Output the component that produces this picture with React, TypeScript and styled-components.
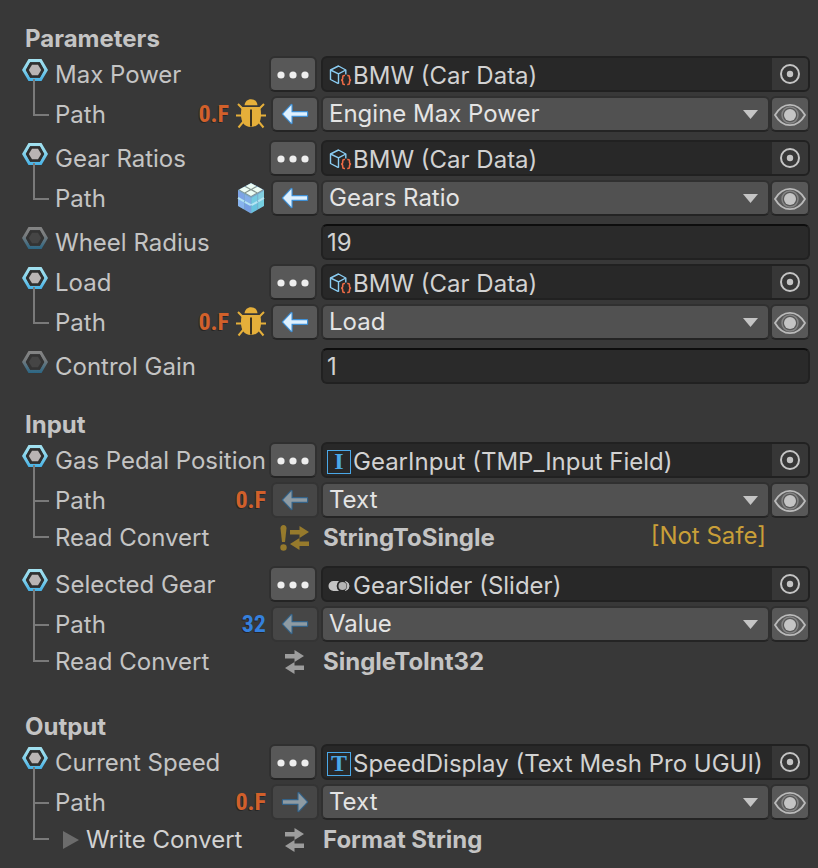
import React, { useId } from "react";
import styled, { createGlobalStyle, css } from "styled-components";

const GlobalStyle = createGlobalStyle`
  *, *::before, *::after { box-sizing: border-box; }
  html { background: #383838; }
  body {
    margin: 0;
    background: #383838;
    color: #c4c4c4;
    font-family: Inter, "Liberation Sans", sans-serif;
    font-size: 24px;
    line-height: 32px;
  }
  button, input, select { font: inherit; color: inherit; margin: 0; }
`;

/* ---------- layout ---------- */

const Inspector = styled.main`
  display: flex;
  flex-direction: column;
  padding: 0 8px 6px 0;
`;

const Section = styled.section`
  display: flex;
  flex-direction: column;
`;

const SectionTitle = styled.h2`
  margin: 0;
  padding: 23px 0 0 25px;
  font-size: 24px;
  font-weight: 700;
  line-height: 31px;
`;

const Group = styled.div<{ $nested?: boolean }>`
  display: flex;
  flex-direction: column;
  padding-bottom: ${(p) => (p.$nested ? 4 : 0)}px;
`;

const Row = styled.div<{ $compact?: boolean }>`
  display: grid;
  grid-template-columns: 55px 214px 52px minmax(0, 1fr);
  align-items: center;
  height: ${(p) => (p.$compact ? 36 : 40)}px;
  margin-bottom: ${(p) => (p.$compact ? 4 : 0)}px;
`;

const HeadGutter = styled.div`
  display: flex;
  flex-direction: column;
  align-self: stretch;
  padding: 5px 0 0 22px;

  svg {
    flex: none;
  }
`;

const Stem = styled.i`
  flex: 1;
  width: 2px;
  margin: -2px 0 0 11px;
  background: #7a7a7a;
`;

const BranchGutter = styled.div`
  display: flex;
  flex-direction: column;
  align-self: stretch;
  padding-left: 33px;
`;

const Elbow = styled.i<{ $compact?: boolean }>`
  width: 16px;
  height: ${(p) => (p.$compact ? 18 : 22)}px;
  border: solid #7a7a7a;
  border-width: 0 0 2px 2px;
`;

const Tail = styled.i`
  flex: 1;
  width: 2px;
  background: #7a7a7a;
`;

const LabelCell = styled.div`
  display: flex;
  align-items: center;
  justify-content: space-between;
  padding-right: 3px;
  white-space: nowrap;
`;

const Label = styled.label`
  padding-top: 2px;
`;

const Badges = styled.span`
  display: flex;
  align-items: center;
  gap: 7px;
`;

const TypeBadge = styled.span<{ $color: string }>`
  color: ${(p) => p.$color};
  font-family: "Roboto Condensed", "Liberation Sans Narrow", Roboto, sans-serif;
  font-size: 24px;
  font-weight: 700;
  line-height: 32px;
  text-shadow: -1px 1px 0 #262626;
`;

const Fold = styled.button`
  display: flex;
  align-items: center;
  gap: 7px;
  padding: 0 0 0 8px;
  border: 0;
  background: none;
  color: #d2d2d2;
`;

/* ---------- controls ---------- */

const raised = css`
  border: 2px solid #303030;
  border-bottom-color: #242424;
  border-radius: 6px;
  background: #585858;
`;

const MoreButton = styled.button`
  ${raised}
  display: grid;
  place-items: center;
  width: 48px;
  height: 36px;
  padding: 2px 0 0;
`;

const ModeButton = styled.button`
  ${raised}
  display: grid;
  place-items: center;
  width: 48px;
  height: 36px;
  margin-left: 2px;
  padding: 0;

  &:disabled {
    border-color: #343434;
    background: #464646;
  }
`;

const sunken = css`
  height: 36px;
  border: 2px solid #212121;
  border-radius: 6px;
  background: #2a2a2a;
  color: #d2d2d2;
`;

const ObjectField = styled.div`
  ${sunken}
  display: flex;
  overflow: hidden;
  background: #282828;
`;

const ObjectName = styled.button`
  display: flex;
  flex: 1;
  align-items: center;
  min-width: 0;
  padding: 3px 0 0 4px;
  border: 0;
  background: none;
  white-space: nowrap;
`;

const ObjectIcon = styled.span`
  display: flex;
  flex: none;
  align-items: center;
  width: 26px;
`;

const LetterIcon = styled.span`
  width: 24px;
  height: 24px;
  border: 1px solid #4aa8e8;
  color: #4aa8e8;
  font-family: "Liberation Serif", serif;
  font-size: 24px;
  font-weight: 700;
  line-height: 20px;
  text-align: center;
`;

const PickerButton = styled.button`
  display: grid;
  flex: none;
  place-items: center;
  width: 36px;
  padding: 0;
  border: 0;
  background: #373737;
`;

const NumberField = styled.input`
  ${sunken}
  width: 100%;
  padding: 0 4px;
  border-top-color: #0d0d0d;
  outline: none;
`;

const PathFields = styled.div`
  display: flex;
`;

const SelectBox = styled.div`
  display: grid;
  flex: 1;
  min-width: 0;

  > * {
    grid-area: 1 / 1;
  }

  > svg {
    align-self: center;
    justify-self: end;
    margin-right: 12px;
    pointer-events: none;
  }
`;

const Select = styled.select`
  ${raised}
  appearance: none;
  width: 100%;
  height: 36px;
  padding: 0 36px 2px 6px;
  background: #515151;
  color: #e4e4e4;
`;

const WatchButton = styled.button`
  ${raised}
  display: grid;
  flex: none;
  place-items: center;
  width: 40px;
  height: 36px;
  padding: 2px 0 0;
`;

const ConvertIcon = styled.span`
  display: flex;
  justify-content: center;
  padding-right: 2px;
`;

const ConvertValue = styled.div`
  display: flex;
  justify-content: space-between;
  padding: 0 44px 0 2px;
  font-weight: 700;
`;

const Warning = styled.span`
  margin-top: -2px;
  color: #c99f38;
  font-weight: 400;
`;

/* ---------- icons ---------- */

const HexIcon = ({ active }: { active?: boolean }) => {
  const id = useId();
  return (
    <svg width="26" height="22" viewBox="0 0 26 22" aria-hidden="true">
      <defs>
        <linearGradient id={id} x1="0" y1="0" x2="0" y2="1">
          <stop offset="0" stopColor={active ? "#a4e2f0" : "#858585"} />
          <stop offset="0.4" stopColor={active ? "#8dd6ec" : "#777b7d"} />
          <stop offset="1" stopColor={active ? "#45b1e6" : "#2b6785"} />
        </linearGradient>
      </defs>
      <path
        fill={`url(#${id})`}
        fillRule="evenodd"
        d="M6.5 0h13L26 11l-6.500 11h-13L0 11ZM8.200 3.200 3.800 11l4.400 7.800h9.600L22.200 11l-4.400-7.800Z"
      />
      <path fill={active ? "#2f2f2f" : "#333"} d="M8.200 3.200h9.600L22.200 11l-4.400 7.800H8.200L3.800 11Z" />
      <path fill={active ? "#b9b4b4" : "#454545"} d="M10 5.700h6L19.200 11 16 16.300h-6L6.800 11Z" />
    </svg>
  );
};

const DotsIcon = () => (
  <svg width="32" height="8" viewBox="0 0 32 8" fill="#eee" aria-hidden="true">
    <circle cx="4" cy="4" r="3.600" />
    <circle cx="16" cy="4" r="3.600" />
    <circle cx="28" cy="4" r="3.600" />
  </svg>
);

const ArrowIcon = ({ right, dim }: { right?: boolean; dim?: boolean }) => (
  <svg width="28" height="24" viewBox="0 0 28 24" aria-hidden="true">
    <path
      d={
        right
          ? "M26 12 17.500 3V10.300H2v3.400h15.500V21Z"
          : "M2 12l8.500-9v7.300H26v3.400H10.500V21Z"
      }
      fill={dim ? "#8e9ba3" : "#def1ff"}
      stroke={dim ? "#336288" : "#3f8fd4"}
      strokeWidth="2.400"
      strokeLinejoin="round"
      paintOrder="stroke"
    />
  </svg>
);

const BugIcon = () => (
  <svg width="30" height="30" viewBox="0 0 30 30" aria-hidden="true">
    <g fill="#e5af3a">
      <path d="M8.500 6.200C9 2.500 11.500.2 15 .2s6 2.300 6.500 6Z" />
      <path d="M6 8h18c.8 2 1 4.500 1 7.500 0 7.500-3 12.500-10 12.500S5 23 5 15.500C5 12.500 5.200 10 6 8Z" />
    </g>
    <path d="M15 10.500V27.500" stroke="#3c3320" strokeWidth="2" />
    <g stroke="#e5af3a" strokeWidth="2" fill="none">
      <path d="M2 5l5 5M28 5l-5 5M0 16.500h6M30 16.500h-6M2.500 28.500l5-6M27.500 28.500l-5-6" />
    </g>
  </svg>
);

const BlockIcon = () => {
  const top = [
    [13, 0],
    [6.5, 3.5],
    [19.5, 3.5],
    [13, 7],
  ];
  return (
    <svg width="29" height="31" viewBox="-1 0 29 31" aria-hidden="true">
      <path d="M13 0l13 7v16l-13 7.500L0 23V7Z" fill="#78a7c9" />
      <path d="M13 .8l12 6.400-12 6.600L1 7.200Z" fill="#84948f" />
      <g fill="#ecfdf5">
        {top.map(([x, y]) => (
          <path key={`${x}-${y}`} d={`M${x} ${y + 0.2}l5.200 2.800-5.200 2.900-5.200-2.900Z`} />
        ))}
      </g>
      <g>
        <path d="M0 7.800l6 3.400v7L0 14.700Z" fill="#7da3e6" />
        <path d="M6.800 11.600l6 3.300v7l-6-3.400Z" fill="#83aeea" />
        <path d="M0 15.800l6 3.400v7L0 22.700Z" fill="#88b4ee" />
        <path d="M6.800 19.600l6 3.300v7l-6-3.400Z" fill="#769fe3" />
        <path d="M13.400 14.900l6-3.300v7l-6 3.300Z" fill="#74cbe0" />
        <path d="M20.200 11.200l5.800-3.400v7l-5.800 3.300Z" fill="#83cfe0" />
        <path d="M13.400 22.900l6-3.300v7l-6 3.300Z" fill="#67c3de" />
        <path d="M20.200 19.200l5.800-3.400v7l-5.800 3.300Z" fill="#75cfe0" />
      </g>
      <path
        d="M0 14.800l6 3.500M6.800 18.800l6 3.400M13.400 22.200l6-3.400M20.200 18.300l5.800-3.400"
        stroke="#b4e4f3"
        strokeWidth="2"
      />
    </svg>
  );
};

const swapArrows = "M0 4h9.500V0l9.500 6-9.500 6V8.500H0ZM19 15.500H9.500V12L0 18l9.500 6v-4H19Z";

const SwapIcon = () => (
  <svg width="19" height="24" viewBox="0 0 19 24" fill="#9c9c9c" aria-hidden="true">
    <path d={swapArrows} />
  </svg>
);

const UnsafeSwapIcon = () => (
  <svg width="29" height="26" viewBox="0 0 29 26" fill="#967a2c" aria-hidden="true">
    <path d="M.5 3.500C.5 1.300 1.700 0 3.500 0s3 1.300 3 3.500L5 17H2Z" />
    <circle cx="3.500" cy="22.500" r="3.200" />
    <path transform="translate(10 1)" d={swapArrows} />
  </svg>
);

const CaretIcon = () => (
  <svg width="15" height="9" viewBox="0 0 15 9" aria-hidden="true">
    <path d="M0 0h15L7.500 9Z" fill="#c4c4c4" />
  </svg>
);

const FoldIcon = () => (
  <svg width="16" height="18" viewBox="0 0 16 18" aria-hidden="true">
    <path d="M0 0v18l16-9Z" fill="#6c6c6c" />
  </svg>
);

const TargetIcon = () => (
  <svg width="20" height="20" viewBox="0 0 20 20" aria-hidden="true">
    <circle cx="10" cy="10" r="9" fill="none" stroke="#c4c4c4" strokeWidth="2" />
    <circle cx="10" cy="10" r="3.200" fill="#c4c4c4" />
  </svg>
);

const EyeIcon = () => (
  <svg width="32" height="24" viewBox="0 0 32 24" aria-hidden="true">
    <path
      d="M1 12C5 5 10 1.800 16 1.800S27 5 31 12c-4 7-9 10.200-15 10.200S5 19 1 12Z"
      fill="none"
      stroke="#bababa"
      strokeWidth="1.800"
    />
    <circle cx="16" cy="12" r="8" fill="none" stroke="#858585" strokeWidth="1.500" />
    <circle cx="16" cy="12" r="6" fill="#c4c4c4" />
  </svg>
);

const ScriptableIcon = () => (
  <svg width="26" height="24" viewBox="0 0 26 24" fill="none" aria-hidden="true">
    <g stroke="#8accf2" strokeWidth="1.400" strokeLinejoin="round">
      <path d="M12 18.800 11 19.300 3.500 15.500V6L11.500 2 18.800 6V10.500" />
      <path d="M3.500 6l8 3.800L18.800 6M11.500 9.800V19" />
    </g>
    <g stroke="#ec6a45" strokeWidth="1.600">
      <path d="M18 11.500h-.8q-1.500 0-1.500 1.500v1.500q0 1.400-1.500 1.600 1.500.2 1.500 1.600V19q0 1.500 1.500 1.500h.8" />
      <path d="M20.200 11.500h.8q1.500 0 1.500 1.500v1.500q0 1.400 1.500 1.600-1.500.2-1.500 1.600V19q0 1.500-1.500 1.500h-.8" />
    </g>
  </svg>
);

const SliderIcon = () => (
  <svg width="24" height="12" viewBox="0 0 24 12" aria-hidden="true">
    <path d="M6.500 1H12a6.500 6.500 0 0 0 0 10H6.500A5 5 0 0 1 6.500 1Z" fill="#c4c4c4" />
    <circle cx="15.500" cy="6" r="4" fill="#b4b4b4" />
    <path d="M18.500 1.500A6 6 0 0 1 18.500 10.500Q22 9.500 22 6T18.500 1.500Z" fill="#c4c4c4" stroke="#c4c4c4" />
  </svg>
);

/* ---------- rows ---------- */

const objectIcons = {
  asset: <ScriptableIcon />,
  input: <LetterIcon>I</LetterIcon>,
  text: <LetterIcon>T</LetterIcon>,
  slider: <SliderIcon />,
};

const BoundRow = ({
  label,
  icon,
  object,
}: {
  label: string;
  icon: keyof typeof objectIcons;
  object: string;
}) => {
  const id = useId();
  return (
    <Row>
      <HeadGutter>
        <HexIcon active />
        <Stem />
      </HeadGutter>
      <LabelCell>
        <Label htmlFor={id}>{label}</Label>
      </LabelCell>
      <MoreButton type="button" aria-label="More options">
        <DotsIcon />
      </MoreButton>
      <ObjectField>
        <ObjectName type="button" id={id}>
          <ObjectIcon>{objectIcons[icon]}</ObjectIcon>
          {object}
        </ObjectName>
        <PickerButton type="button" aria-label="Select object">
          <TargetIcon />
        </PickerButton>
      </ObjectField>
    </Row>
  );
};

const PathRow = ({
  value,
  type,
  debug,
  locked,
  write,
  more,
}: {
  value: string;
  type: "float" | "int" | "array";
  debug?: boolean;
  locked?: boolean;
  write?: boolean;
  more?: boolean;
}) => {
  const id = useId();
  return (
    <Row>
      <BranchGutter>
        <Elbow />
        {more && <Tail />}
      </BranchGutter>
      <LabelCell>
        <Label htmlFor={id}>Path</Label>
        <Badges>
          {type === "float" && <TypeBadge $color="#d2602a">0.F</TypeBadge>}
          {type === "int" && <TypeBadge $color="#3580dd">32</TypeBadge>}
          {type === "array" && <BlockIcon />}
          {debug && <BugIcon />}
        </Badges>
      </LabelCell>
      <ModeButton type="button" disabled={locked} aria-label="Bind mode">
        <ArrowIcon right={write} dim={locked} />
      </ModeButton>
      <PathFields>
        <SelectBox>
          <Select id={id} defaultValue={value}>
            <option>{value}</option>
          </Select>
          <CaretIcon />
        </SelectBox>
        <WatchButton type="button" aria-label="Watch value">
          <EyeIcon />
        </WatchButton>
      </PathFields>
    </Row>
  );
};

const ConvertRow = ({
  label,
  value,
  unsafe,
  foldable,
}: {
  label: string;
  value: string;
  unsafe?: boolean;
  foldable?: boolean;
}) => (
  <Row $compact>
    <BranchGutter>
      <Elbow $compact />
    </BranchGutter>
    <LabelCell>
      {foldable ? (
        <Fold type="button" aria-expanded="false">
          <FoldIcon />
          {label}
        </Fold>
      ) : (
        <span>{label}</span>
      )}
    </LabelCell>
    <ConvertIcon>{unsafe ? <UnsafeSwapIcon /> : <SwapIcon />}</ConvertIcon>
    <ConvertValue>
      {value}
      {unsafe && <Warning>[Not Safe]</Warning>}
    </ConvertValue>
  </Row>
);

const NumberRow = ({ label, value }: { label: string; value: string }) => {
  const id = useId();
  return (
    <Row>
      <HeadGutter>
        <HexIcon />
      </HeadGutter>
      <LabelCell>
        <Label htmlFor={id}>{label}</Label>
      </LabelCell>
      <span />
      <NumberField id={id} defaultValue={value} inputMode="decimal" />
    </Row>
  );
};

export default function App() {
  return (
    <>
      <GlobalStyle />
      <Inspector>
        <Section>
          <SectionTitle>Parameters</SectionTitle>
          <Group $nested>
            <BoundRow label="Max Power" icon="asset" object="BMW (Car Data)" />
            <PathRow type="float" debug value="Engine Max Power" />
          </Group>
          <Group $nested>
            <BoundRow label="Gear Ratios" icon="asset" object="BMW (Car Data)" />
            <PathRow type="array" value="Gears Ratio" />
          </Group>
          <Group>
            <NumberRow label="Wheel Radius" value="19" />
          </Group>
          <Group $nested>
            <BoundRow label="Load" icon="asset" object="BMW (Car Data)" />
            <PathRow type="float" debug value="Load" />
          </Group>
          <Group>
            <NumberRow label="Control Gain" value="1" />
          </Group>
        </Section>
        <Section>
          <SectionTitle>Input</SectionTitle>
          <Group $nested>
            <BoundRow label="Gas Pedal Position" icon="input" object="GearInput (TMP_Input Field)" />
            <PathRow type="float" locked more value="Text" />
            <ConvertRow label="Read Convert" value="StringToSingle" unsafe />
          </Group>
          <Group $nested>
            <BoundRow label="Selected Gear" icon="slider" object="GearSlider (Slider)" />
            <PathRow type="int" locked more value="Value" />
            <ConvertRow label="Read Convert" value="SingleToInt32" />
          </Group>
        </Section>
        <Section>
          <SectionTitle>Output</SectionTitle>
          <Group $nested>
            <BoundRow label="Current Speed" icon="text" object="SpeedDisplay (Text Mesh Pro UGUI)" />
            <PathRow type="float" locked write more value="Text" />
            <ConvertRow label="Write Convert" value="Format String" foldable />
          </Group>
        </Section>
      </Inspector>
    </>
  );
}
